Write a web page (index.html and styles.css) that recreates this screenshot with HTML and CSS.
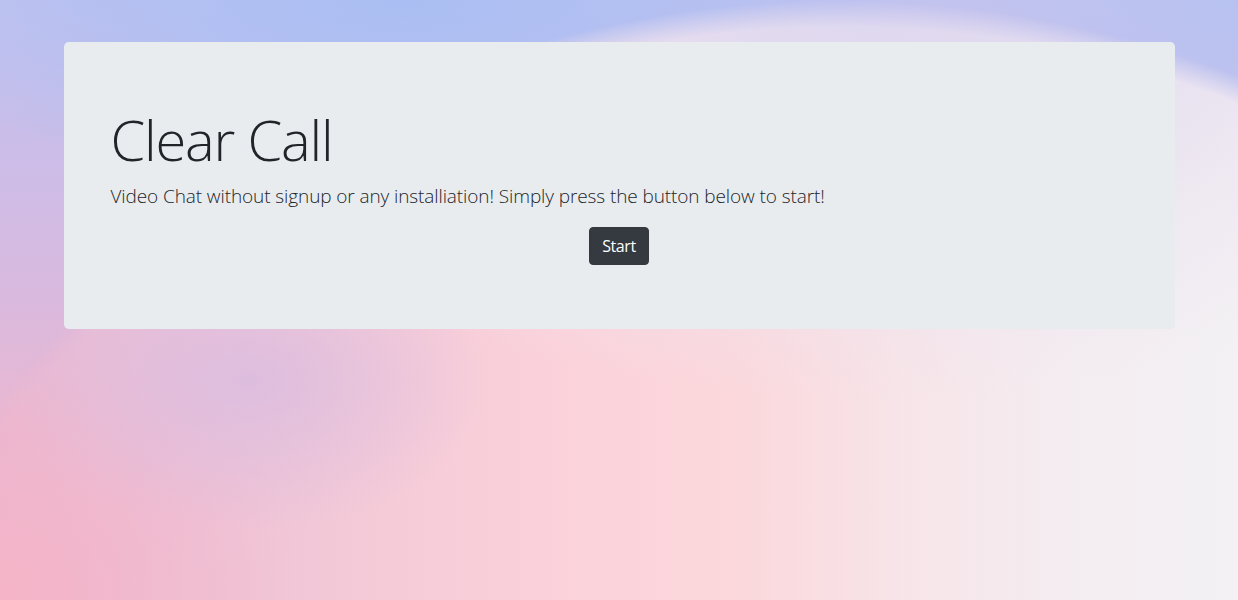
FILE: index.html
```html
<!DOCTYPE html>
<html lang="en">
<head>
<meta charset="utf-8">
<title>Clear Call</title>
<link rel="stylesheet" href="styles.css">
</head>
<body>
<div class="page">
  <div class="container">
    <div class="jumbotron">
      <h1 class="display">Clear Call</h1>
      <p class="lead">Video Chat without signup or any installiation! Simply press the button below to start!</p>
      <div class="actions">
        <button class="btn-dark" type="button">Start</button>
      </div>
    </div>
  </div>
</div>
</body>
</html>
```
FILE: styles.css
```css
html, body {
  margin: 0;
  padding: 0;
  height: 100%;
}
body {
  font-family: "Open Sans", "Noto Sans", sans-serif;
  color: #212529;
  background-color: #c8c2ec;
  background-image:
    radial-gradient(ellipse 520px 200px at 400px 0px, rgba(170,190,243,1) 0%, rgba(170,190,243,0.5) 60%, rgba(170,190,243,0) 100%),
    radial-gradient(ellipse 260px 220px at 1238px 0px, rgba(184,194,241,1) 0%, rgba(184,194,241,0) 100%),
    linear-gradient(180deg, #c2c3ef 0px, #cbbde8 150px, #dab9de 300px, #e6b8d4 400px, #f0b7cc 480px, #f4b6ca 600px);
  position: relative;
  z-index: 0;
  overflow: hidden;
}
/* the large soft arc of the wallpaper */
body::before {
  content: "";
  position: fixed;
  left: -252px;
  top: 0;
  width: 2184px;
  height: 2184px;
  z-index: -1;
  -webkit-mask-image: radial-gradient(circle closest-side, #000 97.5%, rgba(0,0,0,0) 100%);
  mask-image: radial-gradient(circle closest-side, #000 97.5%, rgba(0,0,0,0) 100%);
  background-image:
    radial-gradient(ellipse 240px 150px at 500px 380px, rgba(218,188,224,0.85) 0%, rgba(218,188,224,0) 100%),
    radial-gradient(ellipse 300px 260px at 252px 590px, rgba(245,180,200,1) 0%, rgba(245,180,200,0) 100%),
    radial-gradient(ellipse 760px 400px at 1130px 0px, rgba(221,215,239,1) 0%, rgba(228,221,240,0.9) 35%, rgba(236,228,240,0.5) 68%, rgba(240,232,240,0) 100%),
    linear-gradient(90deg, #e2b9d6 0px, #e8b8d2 252px, #ecc0d6 402px, #f2c8d7 572px, #fbd2da 812px, #fbd8dc 992px, #f7e4e8 1152px, #f4ecf0 1302px, #f3f1f4 1490px);
}
.page {
  padding-top: 42px;
}
.container {
  width: 1111px;
  margin: 0 auto;
}
.jumbotron {
  background: #e9ecef;
  border-radius: 4.8px;
  padding: 64px 47px;
}
.display {
  font-size: 56px;
  font-weight: 300;
  line-height: 1.2;
  letter-spacing: -1.2px;
  margin: 0 0 8px;
  color: #212529;
}
.lead {
  font-size: 19px;
  font-weight: 300;
  line-height: 30px;
  letter-spacing: -0.1px;
  margin: 0 0 16px;
}
.actions {
  text-align: center;
}
.btn-dark {
  font-family: inherit;
  font-size: 16px;
  font-weight: 400;
  line-height: 24px;
  letter-spacing: -0.4px;
  color: #fff;
  background: #343a40;
  border: 1px solid #343a40;
  border-radius: 4px;
  padding: 6px 12px;
  cursor: pointer;
}
```
